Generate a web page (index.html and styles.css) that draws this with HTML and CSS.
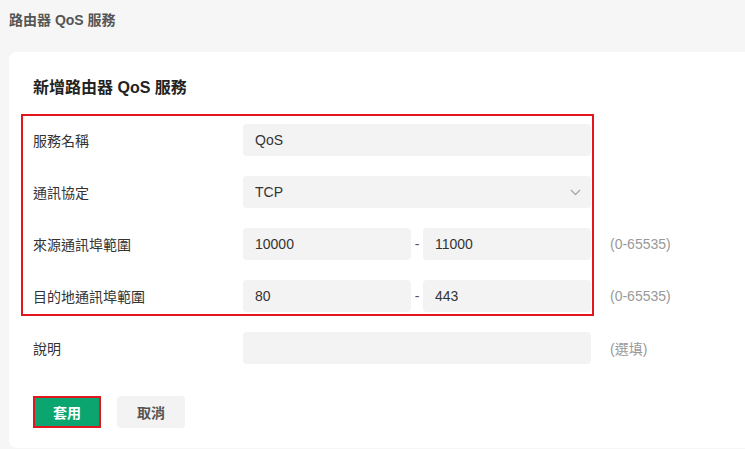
FILE: index.html
```html
<!DOCTYPE html>
<html lang="zh-Hant">
<head>
    <meta charset="UTF-8">
    <meta name="viewport" content="width=device-width, initial-scale=1.0">
    <title>路由器 QoS 服務</title>
    <link rel="stylesheet" href="styles.css">
</head>
<body>
    <h1 class="page_title">路由器 QoS 服務</h1>
    <main class="card">
        <h2 class="card_title">新增路由器 QoS 服務</h2>
        <div class="form">
            <div class="mark"></div>
            <div class="row">
                <label>服務名稱</label>
                <div class="field"><div class="input">QoS</div></div>
            </div>
            <div class="row">
                <label>通訊協定</label>
                <div class="field">
                    <div class="input select">
                        <span>TCP</span>
                        <svg width="11" height="7" viewBox="0 0 11 7"><polyline points="1,1 5.5,5.5 10,1" fill="none" stroke="#a8a8a8" stroke-width="1.3"/></svg>
                    </div>
                </div>
            </div>
            <div class="row">
                <label>來源通訊埠範圍</label>
                <div class="field range">
                    <div class="input">10000</div>
                    <span class="dash">-</span>
                    <div class="input">11000</div>
                </div>
                <span class="hint">(0-65535)</span>
            </div>
            <div class="row">
                <label>目的地通訊埠範圍</label>
                <div class="field range">
                    <div class="input">80</div>
                    <span class="dash">-</span>
                    <div class="input">443</div>
                </div>
                <span class="hint">(0-65535)</span>
            </div>
            <div class="row">
                <label>說明</label>
                <div class="field"><div class="input"></div></div>
                <span class="hint">(選填)</span>
            </div>
        </div>
        <div class="buttons">
            <button class="btn apply">套用</button>
            <button class="btn cancel">取消</button>
        </div>
    </main>
</body>
</html>
```

FILE: styles.css
```css
* {
    margin: 0;
    padding: 0;
    box-sizing: border-box;
}
body {
    background-color: #f6f6f6;
    font-family: "Liberation Sans", "Noto Sans CJK TC", sans-serif;
    font-size: 14px;
    color: #333;
    overflow: hidden;
}
.page_title {
    font-size: 14px;
    line-height: 20px;
    font-weight: bold;
    color: #555;
    padding: 10px 9px;
}
.card {
    margin: 12px -30px 0 9px;
    background-color: white;
    border-radius: 8px;
    padding: 24px 24px 20px 24px;
}
.card_title {
    font-size: 16px;
    line-height: 24px;
    font-weight: bold;
    color: #222;
    margin-bottom: 24px;
}
.form {
    position: relative;
    display: flex;
    flex-direction: column;
    gap: 20px;
}
.mark {
    position: absolute;
    top: -10px;
    left: -12px;
    width: 573px;
    height: 202px;
    border: 2px solid #e3161f;
    pointer-events: none;
    z-index: 1;
}
.row {
    display: flex;
    align-items: center;
    height: 32px;
}
.row label {
    width: 210px;
}
.field {
    width: 348px;
}
.range {
    display: flex;
    align-items: center;
}
.range .input {
    flex: 1;
}
.dash {
    width: 12px;
    text-align: center;
    color: #555;
}
.input {
    height: 32px;
    line-height: 32px;
    background-color: #f3f3f3;
    border-radius: 4px;
    padding: 0 12px;
    color: #333;
}
.select {
    display: flex;
    justify-content: space-between;
    align-items: center;
    padding-right: 10px;
}
.hint {
    margin-left: 19px;
    color: #999;
}
.buttons {
    display: flex;
    gap: 16px;
    margin-top: 32px;
}
.btn {
    width: 68px;
    height: 32px;
    border: none;
    border-radius: 4px;
    font-family: inherit;
    font-size: 14px;
    font-weight: bold;
}
.apply {
    background-color: #0ba66f;
    color: white;
    border: 2px solid #e3161f;
    border-radius: 0;
}
.cancel {
    background-color: #f3f3f3;
    color: #555;
}
```
